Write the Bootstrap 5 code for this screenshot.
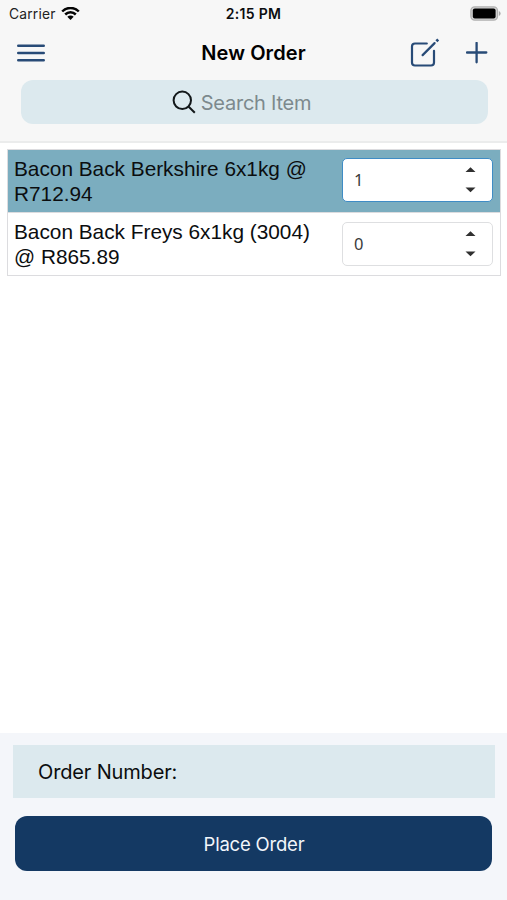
<!DOCTYPE html>
<html lang="en">
<head>
<meta charset="utf-8">
<meta name="viewport" content="width=device-width, initial-scale=1">
<title>New Order</title>
<link href="https://cdn.jsdelivr.net/npm/bootstrap@5.3.0/dist/css/bootstrap.min.css" rel="stylesheet">
<style>
body{font-family:Inter,"Liberation Sans",sans-serif;color:#0b0d0f;height:900px;overflow:hidden}
svg{display:block;flex:none}
.app-head{height:143px;background:#f7f7f7;border-bottom:2px solid #ebecec}
.status-bar{height:28px;padding:0 6px 1px 9px;font-size:14px;line-height:28px}
.carrier{font-size:13.8px;letter-spacing:.2px;color:#222}
.wifi{margin-left:5px}
.clock{font-size:14px;letter-spacing:.3px;margin-right:3px}
.title-bar{height:52px;padding:0 19px 3px 17px}
.title-text{font-size:20px;letter-spacing:.1px;line-height:24px;color:#000;padding-left:2px}
.add-icon{margin-left:26px}
.search-box{height:44px;margin:0 19px 0 21px;border-radius:12px;background:#dce9ee;color:#7d898d;font-size:20px;letter-spacing:-.25px;gap:5px;padding-right:26px}
.search-box span{padding-top:1px}
.item-list{margin:6px 6px 0 7px;border:1px solid #dcdcdf}
.item-row{height:63px;padding:7px 7px 0 6px;font-family:"Liberation Sans",Arial,sans-serif;font-size:20.8px;line-height:24.5px;letter-spacing:0;border-top:1px solid #dcdcdf}
.item-row:first-child{height:62px;padding-top:6px;border-top:0}
.item-row.picked{background:#7badbf}
.item-label{width:310px}
.picked .item-label{padding-top:1px}
.qty{width:151px;height:44px;margin-top:2px;border:1px solid #dedfe1;border-radius:5px;background:#fff;padding:0 16px 0 11px;font-family:"Noto Sans",sans-serif;font-size:16.5px;letter-spacing:0;color:#3a3a3a}
.picked .qty{border-color:#3f8cc5}
.app-foot{height:167px;background:#f4f6fa;padding:12px 12px 0 13px}
.order-no{height:53px;background:#dce9ee;padding-left:25px;font-size:20px;letter-spacing:-.15px}
.btn-place{height:55px;margin:18px 3px 0 2px;border-radius:12px;background:#143963;color:#f2f6fb;font-size:18.5px;letter-spacing:-.2px;padding:8px 0 6px 1px}
.btn-place:hover{background:#143963;color:#f2f6fb}
</style>
<script src="https://cdn.jsdelivr.net/npm/bootstrap@5.3.0/dist/js/bootstrap.bundle.min.js"></script>
</head>
<body class="d-flex flex-column bg-white">
<header class="app-head">
  <div class="status-bar row g-0 align-items-center">
    <div class="col d-flex align-items-center"><span class="carrier">Carrier</span>
      <svg class="wifi" width="19" height="15" viewBox="0 0 19 15" fill="none" stroke="#050505" stroke-width="2.5"><path d="M1.2 4.5C5.8-.2 13.2-.2 17.8 4.5M4.2 7.5C7.2 4.5 11.8 4.5 14.8 7.5"/><path d="M9.5 13 6.3 9.8C8.1 8 10.9 8 12.7 9.8Z" fill="#050505" stroke="none"/></svg>
    </div>
    <div class="col-auto clock fw-semibold">2:15 PM</div>
    <div class="col d-flex justify-content-end">
      <svg width="31" height="16" viewBox="0 0 31 16"><rect x=".9" y=".9" width="26.6" height="13.2" rx="3.8" fill="#d5d5d5" stroke="#b0b0b0" stroke-width="1.3"/><rect x="2.8" y="2.6" width="22.8" height="9.8" rx="2" fill="#000"/><path d="M28.9 5Q30.6 5.8 30.6 7.5T28.9 10Z" fill="#aaa"/></svg>
    </div>
  </div>
  <div class="title-bar row g-0 align-items-center">
    <div class="col"><svg width="28" height="18" viewBox="0 0 28 18" stroke="#284b77" stroke-width="2.6" stroke-linecap="round"><path d="M1.3 1.7H26.7M1.3 9H26.7M1.3 16.2H26.7"/></svg></div>
    <h1 class="col-auto title-text fw-semibold mb-0">New Order</h1>
    <div class="col d-flex justify-content-end align-items-center">
      <svg width="30" height="30" viewBox="0 0 30 30" fill="none" stroke="#284b77" stroke-width="2.2"><path d="M16.8 5.5H5Q2 5.5 2 8.5V24.5Q2 27.5 5 27.5H21Q24 27.5 24 24.5V12.8M12.6 17.1 24.6 5.1" stroke-linecap="round"/><path d="M26.4 3.3 28.2 1.5" stroke-width="2.7"/></svg>
      <svg class="add-icon" width="22" height="22" viewBox="0 0 22 22" stroke="#284b77" stroke-width="2.3" stroke-linecap="round"><path d="M.9 10.5H20.3M10.6.9V20.3"/></svg>
    </div>
  </div>
  <div class="search-box d-flex align-items-center justify-content-center">
    <svg width="24" height="24" viewBox="0 0 24 24" fill="none" stroke="#121719" stroke-width="2"><circle cx="10.3" cy="10.3" r="8.7"/><path d="m16.7 16.7 6.1 6"/></svg>
    <span>Search Item</span>
  </div>
</header>
<main class="flex-grow-1">
  <div class="item-list">
    <div class="item-row picked d-flex justify-content-between">
      <div class="item-label">Bacon Back Berkshire 6x1kg @ R712.94</div>
      <div class="qty d-flex align-items-center justify-content-between"><span>1</span>
        <svg width="11" height="26" viewBox="0 0 11 26" fill="#303030"><path d="M.5 5 5.5.2l5 4.8ZM.5 20.5h10l-5 4.8Z"/></svg></div>
    </div>
    <div class="item-row d-flex justify-content-between">
      <div class="item-label">Bacon Back Freys 6x1kg (3004) @ R865.89</div>
      <div class="qty d-flex align-items-center justify-content-between"><span>0</span>
        <svg width="11" height="26" viewBox="0 0 11 26" fill="#303030"><path d="M.5 5 5.5.2l5 4.8ZM.5 20.5h10l-5 4.8Z"/></svg></div>
    </div>
  </div>
</main>
<footer class="app-foot">
  <div class="order-no d-flex align-items-center">Order Number:</div>
  <div class="d-grid"><button type="button" class="btn btn-place border-0">Place Order</button></div>
</footer>
</body>
</html>
